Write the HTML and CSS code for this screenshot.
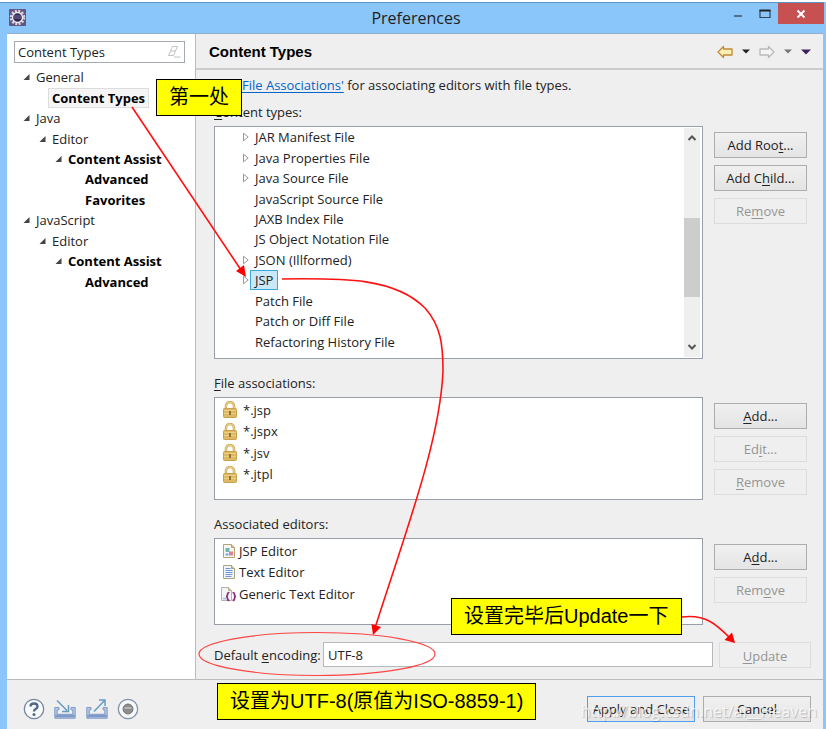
FILE: index.html
```html
<!DOCTYPE html>
<html lang="en">
<head>
<meta charset="utf-8">
<title>Preferences</title>
<link rel="stylesheet" href="styles.css">
</head>
<body>
<svg class="defs" aria-hidden="true">
  <symbol id="open" viewBox="0 0 8 8"><path d="M6.500 1v6H.5z" fill="#444"/></symbol>
  <symbol id="closed" viewBox="0 0 8 10"><path d="M1.500 1.200v7.600L6.200 5z" fill="#fff" stroke="#999"/></symbol>
  <symbol id="lock" viewBox="0 0 14 17"><path d="M3 8V5a4 4 0 0 1 8 0v3" fill="none" stroke="#cfab5c" stroke-width="2.600"/><path d="M3 8V5a4 4 0 0 1 8 0v3" fill="none" stroke="#ead493" stroke-width="1"/><rect x=".5" y="7.500" width="13" height="9" rx="1" fill="#dcb962" stroke="#c9a14c"/><path d="M1 9.500h12M1 12.500h12" stroke="#ebcf82"/><path d="M7 10v4" stroke="#79602a" stroke-width="1.600"/></symbol>
</svg>
<div class="window">
  <header class="titlebar">
    <svg class="app-icon" viewBox="0 0 17 17"><rect width="17" height="17" rx="1" fill="#62557f"/><circle cx="8.500" cy="8.500" r="6.500" fill="none" stroke="#d9d5e2" stroke-width="2.500" stroke-dasharray="2 1.400"/><circle cx="8.500" cy="8.500" r="5" fill="#322650" stroke="#eee" stroke-width="1.300"/><path d="M4.500 7h8M4 9h9" stroke="#7b6c9b"/></svg>
    <h1>Preferences</h1>
    <div class="controls">
      <button class="win-btn" aria-label="Minimize"><svg viewBox="0 0 12 12" width="12" height="12"><path d="M2 8h8" stroke="#50718c" stroke-width="2"/></svg></button>
      <button class="win-btn" aria-label="Maximize"><svg viewBox="0 0 12 12" width="12" height="12"><path d="M1 2.500h10v7H1z" fill="none" stroke="#344555" stroke-width="1.200"/><path d="M.5 2.500h11" stroke="#222" stroke-width="2"/></svg></button>
      <button class="win-btn close" aria-label="Close"><svg viewBox="0 0 10 10" width="10" height="10"><path d="M1.500 1.500l7 7m0-7l-7 7" stroke="#fff" stroke-width="2"/></svg></button>
    </div>
  </header>
  <div class="content">
    <nav class="sidebar">
      <div class="search">
        <input type="text" value="Content Types" aria-label="Filter">
        <svg viewBox="0 0 14 14" width="14" height="14"><path d="M5.500 1.500h5L6.500 10.500h-5zM3.500 6l5 0M7 12h6.500" fill="none" stroke="#c2c2c2"/></svg>
      </div>
      <ul class="tree nav-tree">
        <li class="l0"><svg class="tw"><use href="#open"/></svg><span>General</span></li>
        <li class="l1 bold"><i class="tw"></i><span class="current">Content Types</span></li>
        <li class="l0"><svg class="tw"><use href="#open"/></svg><span>Java</span></li>
        <li class="l1"><svg class="tw"><use href="#open"/></svg><span>Editor</span></li>
        <li class="l2 bold"><svg class="tw"><use href="#open"/></svg><span>Content Assist</span></li>
        <li class="l3 bold"><i class="tw"></i><span>Advanced</span></li>
        <li class="l3 bold"><i class="tw"></i><span>Favorites</span></li>
        <li class="l0"><svg class="tw"><use href="#open"/></svg><span>JavaScript</span></li>
        <li class="l1"><svg class="tw"><use href="#open"/></svg><span>Editor</span></li>
        <li class="l2 bold"><svg class="tw"><use href="#open"/></svg><span>Content Assist</span></li>
        <li class="l3 bold"><i class="tw"></i><span>Advanced</span></li>
      </ul>
    </nav>
    <main class="page">
      <div class="page-head">
        <h2>Content Types</h2>
        <div class="history">
          <button aria-label="Back"><svg viewBox="0 0 16 14" width="16" height="14"><path d="M1 7l5.500-5.500V4H15v6H6.500v2.500z" fill="#fdf0b5" stroke="#c08a35" stroke-width="1.300" stroke-linejoin="round"/></svg></button>
          <button aria-label="Back history"><svg viewBox="0 0 8 5" width="8" height="5"><path d="M0 .5h8L4 4.500z" fill="#222"/></svg></button>
          <button aria-label="Forward"><svg viewBox="0 0 16 14" width="16" height="14"><path d="M15 7L9.500 1.500V4H1v6h8.500v2.500z" fill="#f4f4f4" stroke="#b9b9b9" stroke-width="1.300" stroke-linejoin="round"/></svg></button>
          <button aria-label="Forward history"><svg viewBox="0 0 8 5" width="8" height="5"><path d="M0 .5h8L4 4.500z" fill="#777"/></svg></button>
          <button aria-label="Menu"><svg viewBox="0 0 10 6" width="10" height="6"><path d="M0 .5h10L5 5.500z" fill="#3a2458"/></svg></button>
        </div>
      </div>
      <div class="page-body">
        <p class="hint">See <a href="#assoc">'File Associations'</a> for associating editors with file types.</p>
        <h3><u>C</u>ontent types:</h3>
        <section class="row">
          <div class="box types">
            <ul class="tree type-tree">
              <li><svg class="tw"><use href="#closed"/></svg><span>JAR Manifest File</span></li>
              <li><svg class="tw"><use href="#closed"/></svg><span>Java Properties File</span></li>
              <li><svg class="tw"><use href="#closed"/></svg><span>Java Source File</span></li>
              <li><i class="tw"></i><span>JavaScript Source File</span></li>
              <li><i class="tw"></i><span>JAXB Index File</span></li>
              <li><i class="tw"></i><span>JS Object Notation File</span></li>
              <li><svg class="tw"><use href="#closed"/></svg><span>JSON (Illformed)</span></li>
              <li><svg class="tw"><use href="#closed"/></svg><span class="selected">JSP</span></li>
              <li><i class="tw"></i><span>Patch File</span></li>
              <li><i class="tw"></i><span>Patch or Diff File</span></li>
              <li><i class="tw"></i><span>Refactoring History File</span></li>
            </ul>
            <div class="scrollbar">
              <svg viewBox="0 0 10 8" width="10" height="8"><path d="M1.500 6L5 2.500 8.500 6" fill="none" stroke="#555" stroke-width="2"/></svg>
              <div class="track"><div class="thumb"></div></div>
              <svg viewBox="0 0 10 8" width="10" height="8"><path d="M1.500 2L5 5.500 8.500 2" fill="none" stroke="#555" stroke-width="2"/></svg>
            </div>
          </div>
          <div class="buttons">
            <button class="btn">Add Roo<u>t</u>...</button>
            <button class="btn">Add C<u>h</u>ild...</button>
            <button class="btn" disabled>Re<u>m</u>ove</button>
          </div>
        </section>
        <h3 id="assoc"><u>F</u>ile associations:</h3>
        <section class="row">
          <ul class="box list files">
            <li><svg class="ic"><use href="#lock"/></svg>*.jsp</li>
            <li><svg class="ic"><use href="#lock"/></svg>*.jspx</li>
            <li><svg class="ic"><use href="#lock"/></svg>*.jsv</li>
            <li><svg class="ic"><use href="#lock"/></svg>*.jtpl</li>
          </ul>
          <div class="buttons">
            <button class="btn"><u>A</u>dd...</button>
            <button class="btn" disabled>Ed<u>i</u>t...</button>
            <button class="btn" disabled><u>R</u>emove</button>
          </div>
        </section>
        <h3>Associated editors:</h3>
        <section class="row">
          <ul class="box list editors">
            <li><svg class="ic" viewBox="0 0 16 16"><path d="M2.500 1.500h8l3 3v10h-11z" fill="#f5f6f8" stroke="#b5a36b"/><path d="M10.500 1.500v3h3" fill="#ddca8b" stroke="#b5a36b"/><path d="M4.500 5h4v4h-4z" fill="#72b8a5"/><path d="M8 8.500h4v4H8z" fill="#e08294"/><path d="M4.500 10.500h3v2h-3z" fill="#7ba6d8"/></svg>JSP Editor</li>
            <li><svg class="ic" viewBox="0 0 16 16"><path d="M2.500 1.500h8l3 3v10h-11z" fill="#eef4fc" stroke="#a9a47e"/><path d="M10.500 1.500v3h3" fill="#ddca8b" stroke="#b5a36b"/><path d="M4.500 4.500h5M4.500 6.500h7M4.500 8.500h7M4.500 10.500h7M4.500 12.500h6" stroke="#7196cd"/></svg>Text Editor</li>
            <li><svg class="ic" viewBox="0 0 16 16"><path d="M.5 1.500h7l3 3v10H.5z" fill="#f2f5fa" stroke="#b0b2b8"/><path d="M7.500 1.500v3h3" fill="#ddca8b" stroke="#c3b37f"/><path d="M2 11.500h3v2H2z" fill="#afc4e2"/><path d="M8.500 6.500Q6.500 6.500 6.500 8.500 6.500 10.500 5 10.500 6.500 10.500 6.500 12.500 6.500 14.500 8.500 14.500M11.500 6.500q2 0 2 2 0 2 1.500 2-1.500 0-1.500 2 0 2-2 2" fill="none" stroke="#8b3279" stroke-width="1.700"/></svg>Generic Text Editor</li>
          </ul>
          <div class="buttons">
            <button class="btn">A<u>d</u>d...</button>
            <button class="btn" disabled>Rem<u>o</u>ve</button>
          </div>
        </section>
        <div class="encoding">
          <label for="enc">Default <u>e</u>ncoding:</label>
          <input id="enc" type="text" value="UTF-8">
          <button class="btn" disabled><u>U</u>pdate</button>
        </div>
      </div>
    </main>
  </div>
  <footer class="footer">
    <div class="tools">
      <button aria-label="Help"><svg viewBox="0 0 22 22" width="22" height="22"><circle cx="11" cy="11" r="9.700" fill="#f7f9fb" stroke="#74879f" stroke-width="1.300"/><path d="M7.500 8.500Q7.500 5.500 11 5.500T14.500 8.500Q14.500 10 12.700 11T11 13.500" fill="none" stroke="#50688a" stroke-width="2.300"/><circle cx="11" cy="16.500" r="1.500" fill="#50688a"/></svg></button>
      <button aria-label="Import"><svg viewBox="0 0 24 22" width="24" height="22"><path d="M6 9.500H1.800v10.700h20.400V9.500H18v2.300h1.800v4.500H4.200v-4.500H6z" fill="#b7c9e6" stroke="#7f9ac6"/><path d="M2.300 18h19.400" stroke="#7f9ac6" stroke-width="2.500"/><path d="M4 2.500l10 10M9 13.500h6.500V7" fill="none" stroke="#659cc2" stroke-width="1.500"/></svg></button>
      <button aria-label="Export"><svg viewBox="0 0 24 22" width="24" height="22"><path d="M6 9.500H1.800v10.700h20.400V9.500H18v2.300h1.800v4.500H4.200v-4.500H6z" fill="#b7c9e6" stroke="#7f9ac6"/><path d="M2.300 18h19.400" stroke="#7f9ac6" stroke-width="2.500"/><path d="M9 13.500L19.500 2.500M14 2h6v6" fill="none" stroke="#659cc2" stroke-width="1.500"/></svg></button>
      <button aria-label="Record"><svg viewBox="0 0 22 22" width="22" height="22"><circle cx="11" cy="11" r="9.700" fill="#f7f9fb" stroke="#8291a5" stroke-width="1.300"/><circle cx="11" cy="11" r="5" fill="#8d8d8d" stroke="#777"/><path d="M7.500 10h7" stroke="#b5b5b5" stroke-width="2"/></svg></button>
    </div>
    <div class="actions">
      <button class="btn primary">Apply and Close</button>
      <button class="btn">Cancel</button>
    </div>
  </footer>
  <svg class="arrows" width="826" height="729" viewBox="0 0 826 729" aria-hidden="true">
    <g fill="none" stroke="#f11" stroke-width="1.600">
      <path d="M132 107L241 270"/>
      <path d="M282 279C345 278 395 278 425 308C441 326 443 345 443 371C440 440 408 525 375 628"/>
      <path d="M682 617C706 614 717 625 730 638"/>
      <ellipse cx="317" cy="654" rx="118" ry="21.500" stroke="#f44" stroke-width="1.200"/>
    </g>
    <path d="M246 277L236 271 244 265zM373 635L371.500 624 381 627zM735 643L724.500 640 732 632.500z" fill="#f00"/>
  </svg>
  <div class="note note-first">第一处</div>
  <div class="note note-update">设置完毕后Update一下</div>
  <div class="note note-value">设置为UTF-8(原值为ISO-8859-1)</div>
  <div class="watermark">http://blog.csdn.net/ai__Heaven</div>
</div>
</body>
</html>
```
FILE: styles.css
```css
* { box-sizing: border-box; }
body {
  margin: 0;
  background: #fff;
  color: #222;
  font: 13px/20px "Open Sans", "Noto Sans CJK SC", sans-serif;
}
ul { list-style: none; margin: 0; padding: 0; }
h1, h2, h3, p { margin: 0; font-weight: 400; font-size: 13px; }
button, input { font: inherit; color: inherit; }
u { text-underline-offset: 2px; }
.defs { position: absolute; width: 0; height: 0; }

.window {
  position: relative;
  display: flex;
  flex-direction: column;
  min-height: 100vh;
  padding: 0 3px 0 7px;
  border-top: 2px solid #fff;
  background: #8bc6fa;
}
.titlebar {
  display: flex;
  justify-content: space-between;
  height: 31px;
  margin: 0 -1px 0 -7px;
  border-top: 1px solid #5b93c4;
}
.app-icon { width: 17px; height: 17px; margin: 6px 0 0 9px; }
.titlebar h1 {
  flex: 1;
  padding-left: 82px;
  font-size: 16px;
  line-height: 30px;
  text-align: center;
}
.controls { display: flex; }
.win-btn {
  display: grid;
  place-items: center;
  width: 27px;
  height: 21px;
  padding: 0;
  border: 0;
  background: none;
}
.win-btn.close { width: 46px; background: #c75050; }

.content {
  display: flex;
  flex: 1;
  border-top: 1px solid #8fafca;
  border-bottom: 1px solid #bbb;
}
.sidebar {
  width: 189px;
  padding: 7px 10px 0 7px;
  border-right: 1px solid #bbb;
  background: #fff;
}
.search {
  display: flex;
  align-items: center;
  height: 22px;
  margin-bottom: 4px;
  padding-right: 3px;
  border: 1px solid #a5aab2;
}
.search input {
  flex: 1;
  min-width: 0;
  height: 20px;
  padding: 0 3px;
  border: 0;
  background: none;
  outline: 0;
}
.tree { display: grid; grid-auto-rows: 1fr; }
.tree li { display: flex; align-items: center; }
.tree span { padding: 0 4px; border: 1px solid transparent; line-height: 18px; white-space: nowrap; }
.tree .tw { flex: none; width: 8px; height: 10px; }
.nav-tree { height: 225px; }
.nav-tree .tw { height: 8px; margin-left: 9px; }
.l1 { padding-left: 16px; }
.l2 { padding-left: 32px; }
.l3 { padding-left: 49px; }
.bold { font-weight: 700; color: #000; }
.tree .current { padding: 0 3px; margin-left: 1px; border-color: #ddd; background: #f5f5f5; }

.page { flex: 1; min-width: 0; background: #efefef; }
.page-head {
  display: flex;
  align-items: center;
  justify-content: space-between;
  height: 36px;
  padding: 1px 12px 0 13px;
  border-bottom: 2px solid #ccc;
}
.page-head h2 { font: 700 15px/20px "Liberation Sans", sans-serif; color: #000; }
.history { display: flex; align-items: center; gap: 9px; }
.history button, .tools button { display: flex; padding: 0; border: 0; background: none; }
.page-body { padding: 5px 16px 11px 18px; }
a { color: #0066cc; text-underline-offset: 2px; }
h3 { margin-bottom: 4px; }
.hint { margin-bottom: 7px; }
.row {
  display: grid;
  grid-template-columns: 1fr 93px;
  gap: 11px;
  margin-bottom: 14px;
}
.box { border: 1px solid #999fa8; background: #fff; }
.types { display: flex; justify-content: space-between; height: 233px; padding: 0 2px 1px 27px; }
.type-tree { height: 225px; }
.tree .selected { border-color: #3ba7dc; background: #cbe8f6; }
.scrollbar {
  display: flex;
  flex-direction: column;
  align-items: center;
  width: 16px;
  margin-top: 1px;
  padding: 6px 0;
  background: #efefef;
}
.track { flex: 1; align-self: stretch; padding-top: 76px; }
.thumb { height: 79px; background: #cdcdcd; }
.buttons { display: flex; flex-direction: column; gap: 7px; padding-top: 6px; }
.btn {
  height: 26px;
  padding: 0;
  border: 1px solid #adadad;
  background: linear-gradient(#f0f0f0, #e4e4e4);
}
.btn:disabled { border-color: #dcdcdc; background: #efefef; color: #959595; }
.list { display: grid; align-content: start; grid-auto-rows: 1fr; }
.list li { display: flex; align-items: center; }
.files { height: 103px; padding: 1px 8px 14px; align-content: stretch; }
.files .ic { width: 14px; height: 17px; margin-right: 6px; }
.editors { height: 87px; padding: 1px 6px 19px; align-content: stretch; }
.editors .ic { width: 16px; height: 16px; margin-right: 2px; }
.encoding { display: flex; margin: 17px -4px 0 0; line-height: 26px; }
.encoding label { width: 109px; white-space: nowrap; }
.encoding input { flex: 1; min-width: 0; height: 25px; padding: 0 4px; border: 1px solid #b5b8bd; background: #fff; outline: 0; }
.encoding .btn { width: 92px; margin-left: 6px; }

.footer {
  display: flex;
  align-items: center;
  justify-content: space-between;
  height: 50px;
  padding: 8px 12px 0 16px;
  background: #efefef;
}
.tools { display: flex; gap: 8px; }
.actions { display: flex; gap: 8px; }
.actions .btn { width: 108px; }
.actions .primary { border-color: #4f9ef0; }

.arrows { position: absolute; left: 0; top: -2px; pointer-events: none; }
.note {
  position: absolute;
  height: 37px;
  padding: 0 12px;
  border: 1px solid #000;
  background: #ff0;
  color: #000;
  font: 20px/35px "Liberation Sans", "Noto Sans CJK SC", sans-serif;
  white-space: nowrap;
}
.note-first { left: 156px; top: 77px; }
.note-update { left: 451px; top: 596px; }
.note-value { left: 217px; top: 681px; }
.watermark {
  position: absolute;
  right: 9px;
  top: 699px;
  color: rgba(255, 255, 255, .75);
  font: 16px/20px "Open Sans", sans-serif;
  text-shadow: 1px 1px 1px rgba(0, 0, 0, .2);
}
```
